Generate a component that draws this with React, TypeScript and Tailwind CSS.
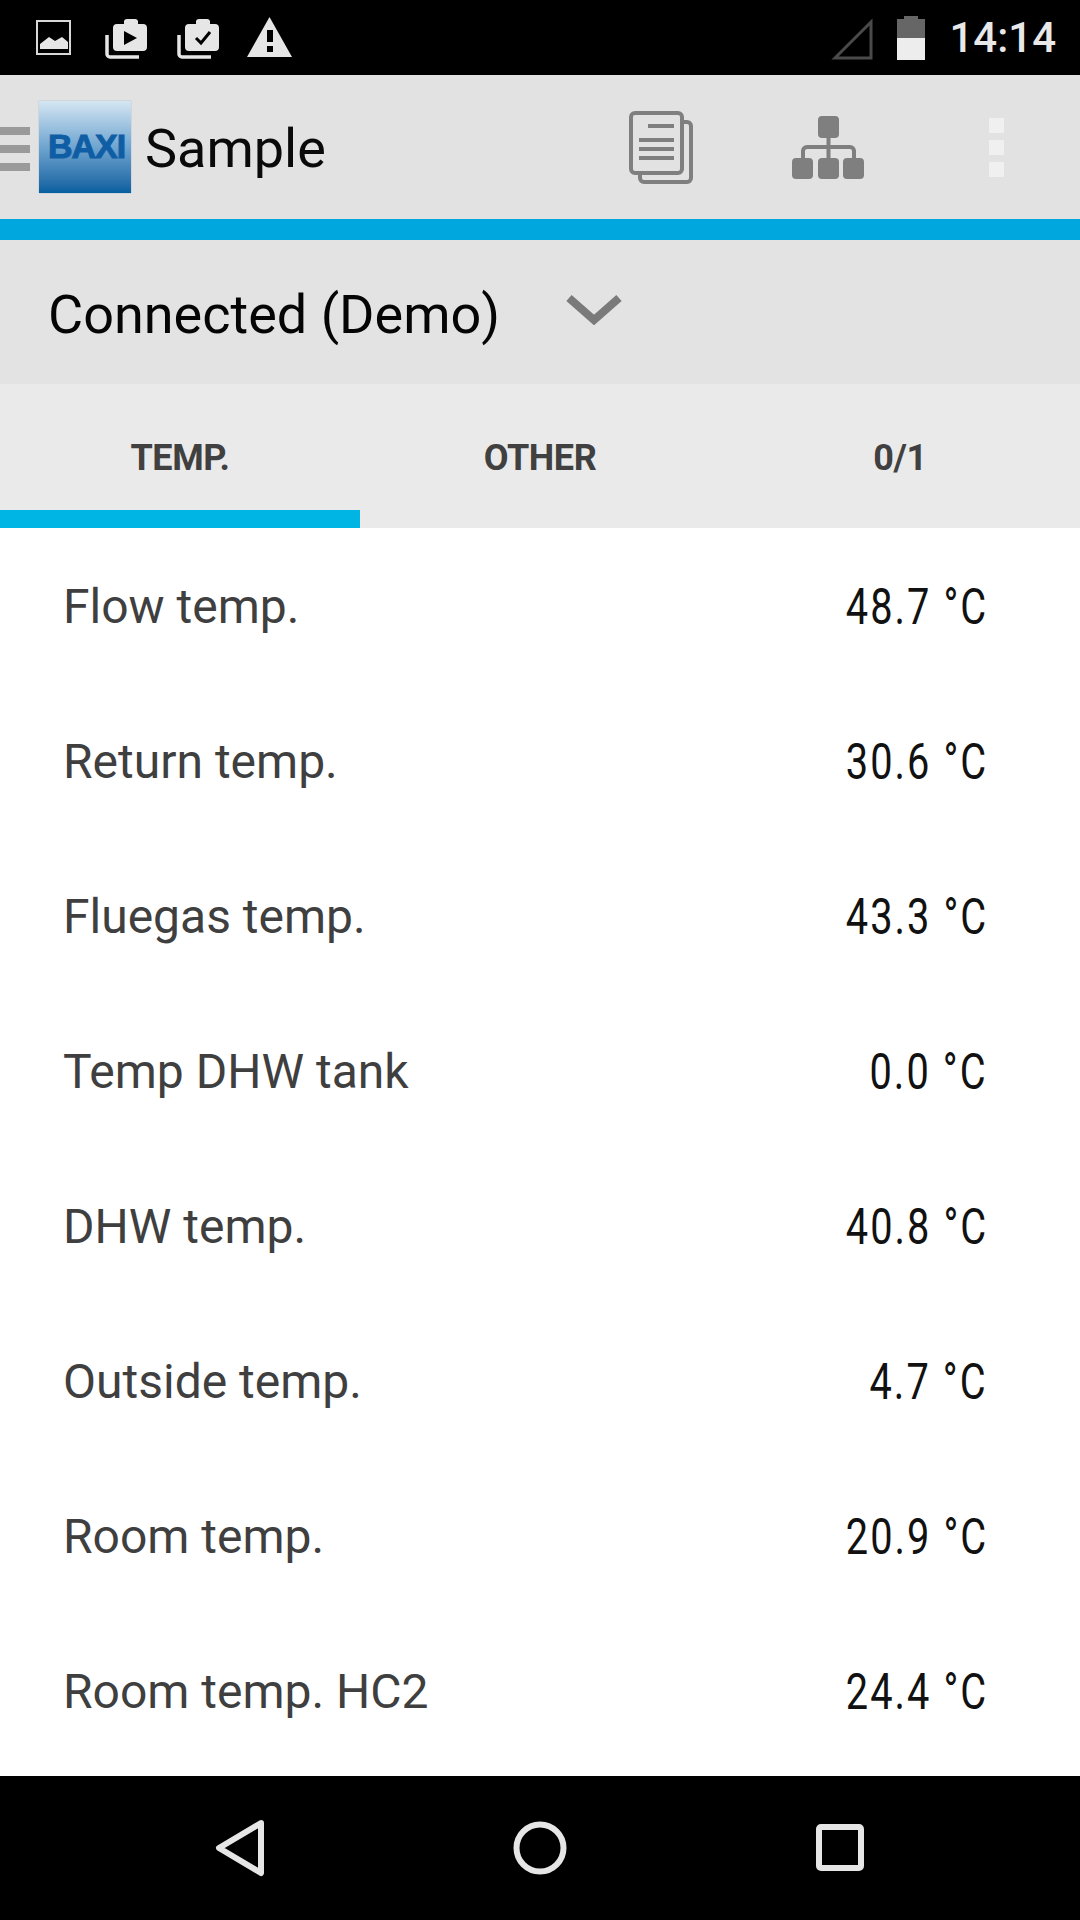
const rows = [
  ["Flow temp.", "48.7 °C"],
  ["Return temp.", "30.6 °C"],
  ["Fluegas temp.", "43.3 °C"],
  ["Temp DHW tank", "0.0 °C"],
  ["DHW temp.", "40.8 °C"],
  ["Outside temp.", "4.7 °C"],
  ["Room temp.", "20.9 °C"],
  ["Room temp. HC2", "24.4 °C"],
];

function StatusIcons() {
  return (
    <svg width="300" height="75" viewBox="0 0 300 75" fill="#e6e6e6">
      {/* picture */}
      <rect x="37" y="21" width="33" height="33" fill="none" stroke="#d8d8d8" strokeWidth="2" />
      <path d="M40 49v-5l9-7 6 4 7-4 6 5v7z" />
      {/* briefcase play */}
      <path d="M117 24h7v-3a3 3 0 0 1 3-2h8a3 3 0 0 1 3 2v3h5a4 4 0 0 1 4 4v19a4 4 0 0 1-4 4h-26a4 4 0 0 1-4-4v-19a4 4 0 0 1 4-4z" />
      <path d="M124 31l13 7-13 7z" fill="#000" />
      <path d="M107 35v19a3 3 0 0 0 3 3h29" fill="none" stroke="#e6e6e6" strokeWidth="3.5" />
      {/* briefcase check */}
      <path d="M189 24h7v-3a3 3 0 0 1 3-2h8a3 3 0 0 1 3 2v3h5a4 4 0 0 1 4 4v19a4 4 0 0 1-4 4h-26a4 4 0 0 1-4-4v-19a4 4 0 0 1 4-4z" />
      <path d="M196 38l5 5 9-11" fill="none" stroke="#000" strokeWidth="3" />
      <path d="M179 35v19a3 3 0 0 0 3 3h29" fill="none" stroke="#e6e6e6" strokeWidth="3.5" />
      {/* warning */}
      <path d="M269.500 17L292 57h-45z" />
      <rect x="267" y="30" width="6" height="12" fill="#000" />
      <rect x="267" y="46" width="6" height="6" fill="#000" />
    </svg>
  );
}

function DocsIcon() {
  return (
    <svg width="64" height="73" viewBox="0 0 64 73" fill="none" stroke="#7f7f7f" strokeWidth="4">
      <rect x="2" y="2" width="51" height="60" rx="4" />
      <path d="M53 11h5a4 4 0 0 1 4 4v52a4 4 0 0 1-4 4H15a4 4 0 0 1-4-4v-5" />
      <path d="M19 15h26M10 29h35M10 38h35M10 47h35" strokeWidth="4" />
    </svg>
  );
}

function TreeIcon() {
  return (
    <svg width="72" height="63" viewBox="0 0 72 63" fill="#7f7f7f">
      <rect x="26" y="0" width="21" height="22" rx="4" />
      <rect x="0" y="42" width="21" height="21" rx="4" />
      <rect x="26" y="42" width="21" height="21" rx="4" />
      <rect x="51" y="42" width="21" height="21" rx="4" />
      <path d="M36.500 20v24M11 44v-9a4 4 0 0 1 4-4h43a4 4 0 0 1 4 4v9" fill="none" stroke="#7f7f7f" strokeWidth="4" />
    </svg>
  );
}

function BaxiLogo() {
  return (
    <div className="flex h-[92px] w-[92px] items-center justify-center bg-gradient-to-b from-[#d5e6f2] via-[#6fa5d0] to-[#03609f] shadow-[0_0_1px_#7a98ae]">
      <span className="mb-[2px] ml-[3px] text-[34px] leading-none font-bold tracking-[-1px] text-[#0f5ea5] [-webkit-text-stroke:1px_#0f5ea5] [font-family:'Liberation_Sans',sans-serif]">
        BAXI
      </span>
    </div>
  );
}

export default function App() {
  return (
    <div className="flex h-[1920px] w-[1080px] flex-col bg-white [font-family:Roboto,sans-serif]">
      <div className="flex h-[75px] items-center justify-between bg-black pr-[24px]">
        <StatusIcons />
        <div className="flex items-center">
          <svg width="42" height="44" viewBox="0 0 42 44" className="mt-[2px] mr-[24px]" fill="none" stroke="#4a4a4a" strokeWidth="3">
            <path d="M40 5v36H4z" />
          </svg>
          <div className="mr-[24px] flex h-[44px] w-[28px] flex-col items-center">
            <div className="h-[3px] w-[14px] bg-[#666]" />
            <div className="h-[19px] w-full bg-[#666]" />
            <div className="h-[22px] w-full bg-[#ededed]" />
          </div>
          <span className="text-[42px] leading-none font-medium text-[#e8e8e8]">14:14</span>
        </div>
      </div>

      <div className="flex h-[144px] items-center bg-[#e2e2e2]">
        <div className="mt-[4px] flex w-[39px] flex-col gap-[10px]">
          <div className="h-[8px] w-[30px] bg-[#9a9a9a]" />
          <div className="h-[8px] w-[30px] bg-[#9a9a9a]" />
          <div className="h-[8px] w-[30px] bg-[#9a9a9a]" />
        </div>
        <BaxiLogo />
        <span className="mt-[4px] ml-[14px] text-[54px] leading-none text-[#0a0a0a]">Sample</span>
        <div className="ml-auto flex items-center">
          <DocsIcon />
          <div className="ml-[99px]">
            <TreeIcon />
          </div>
          <div className="mr-[76px] ml-[125px] flex flex-col gap-[7px]">
            <div className="h-[15px] w-[15px] bg-[#f0f0f0]" />
            <div className="h-[15px] w-[15px] bg-[#f0f0f0]" />
            <div className="h-[15px] w-[15px] bg-[#f0f0f0]" />
          </div>
        </div>
      </div>
      <div className="h-[21px] bg-[#00a7de]" />

      <div className="flex h-[144px] items-center bg-[#e3e3e3] pl-[48px]">
        <span className="mt-[6px] text-[54px] leading-none text-[#050505]">Connected (Demo)</span>
        <svg width="56" height="30" viewBox="0 0 56 30" className="ml-[66px] -mt-[5px]" fill="none" stroke="#7a7a7a" strokeWidth="8">
          <path d="M3 3l25 22 25-22" />
        </svg>
      </div>

      <div className="grid h-[144px] grid-cols-3 bg-[#eaeaea]">
        {["TEMP.", "OTHER", "0/1"].map((tab, i) => (
          <div key={tab} className={i === 0 ? "flex items-center justify-center border-b-[18px] border-[#00b4e4] pt-[22px]" : "flex items-center justify-center pt-[4px]"}>
            <span className="text-[36px] leading-none font-bold tracking-[-0.4px] text-[#404040]">{tab}</span>
          </div>
        ))}
      </div>

      <div className="flex-1">
        {rows.map(([label, value]) => (
          <div key={label} className="flex h-[155px] items-center justify-between pt-[2px] pr-[92px] pl-[63px]">
            <span className="text-[48px] leading-none text-[#3f3f3f]">{label}</span>
            <span className="origin-right scale-x-[0.795] text-[50px] leading-none tracking-[2.6px] whitespace-nowrap text-[#111]">{value}</span>
          </div>
        ))}
      </div>

      <div className="flex h-[144px] items-center justify-center gap-[240px] bg-black">
        <svg width="60" height="70" viewBox="0 0 60 70" fill="none" stroke="#e6e6e6" strokeWidth="6" strokeLinejoin="round">
          <path d="M51 10L9 35l42 25z" />
        </svg>
        <svg width="60" height="70" viewBox="0 0 60 70" fill="none" stroke="#e6e6e6" strokeWidth="6">
          <circle cx="30" cy="35" r="23.500" />
        </svg>
        <svg width="60" height="70" viewBox="0 0 60 70" fill="none" stroke="#e6e6e6" strokeWidth="6" strokeLinejoin="round">
          <rect x="9" y="14" width="42" height="41" rx="2" />
        </svg>
      </div>
    </div>
  );
}
